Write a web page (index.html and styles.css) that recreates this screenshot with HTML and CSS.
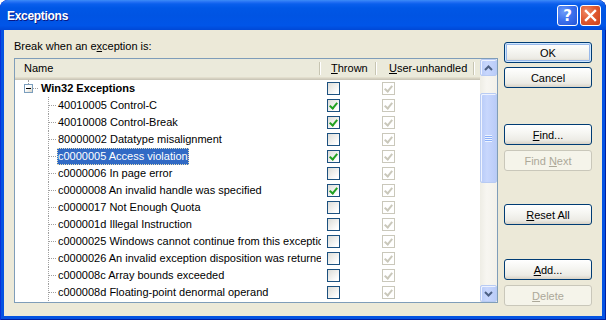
FILE: index.html
```html
<!DOCTYPE html>
<html lang="en">
<head>
    <meta charset="UTF-8">
    <title>Exceptions</title>
    <link rel="stylesheet" href="styles.css">
</head>
<body>
    <div class="window">
        <div class="titlebar">
            <span class="title">Exceptions</span>
            <div class="caption-btns">
                <span class="cap-btn help">?</span>
                <span class="cap-btn close">
                    <svg width="13" height="13" viewBox="0 0 13 13"><path d="M2 2 L11 11 M11 2 L2 11" stroke="#fff" stroke-width="2.4" stroke-linecap="square"/></svg>
                </span>
            </div>
        </div>

        <div class="client">
            <div class="left">
                <div class="prompt">Break when an e<u>x</u>ception is:</div>
                <div class="list">
                    <div class="list-main">
                        <div class="header">
                            <div class="hcell h-name">Name</div>
                            <div class="hcell h-thrown"><u>T</u>hrown</div>
                            <div class="hcell h-user"><u>U</u>ser-unhandled</div>
                            <div class="hcell h-fill"></div>
                        </div>
                        <div class="rows">
                            <div class="row">
                                <div class="cell name root"><span class="exp"><span class="exp-box"></span></span><span class="stub"></span><b class="label">Win32 Exceptions</b></div>
                                <div class="cell thrown"><span class="cb"></span></div>
                                <div class="cell user"><span class="cb off on"></span></div>
                            </div>
                            <div class="row">
                                <div class="cell name child"><span class="twig"></span><span class="label">40010005 Control-C</span></div>
                                <div class="cell thrown"><span class="cb on"></span></div>
                                <div class="cell user"><span class="cb off on"></span></div>
                            </div>
                            <div class="row">
                                <div class="cell name child"><span class="twig"></span><span class="label">40010008 Control-Break</span></div>
                                <div class="cell thrown"><span class="cb on"></span></div>
                                <div class="cell user"><span class="cb off on"></span></div>
                            </div>
                            <div class="row">
                                <div class="cell name child"><span class="twig"></span><span class="label">80000002 Datatype misalignment</span></div>
                                <div class="cell thrown"><span class="cb"></span></div>
                                <div class="cell user"><span class="cb off on"></span></div>
                            </div>
                            <div class="row">
                                <div class="cell name child"><span class="twig"></span><span class="label selected">c0000005 Access violation</span></div>
                                <div class="cell thrown"><span class="cb on"></span></div>
                                <div class="cell user"><span class="cb off on"></span></div>
                            </div>
                            <div class="row">
                                <div class="cell name child"><span class="twig"></span><span class="label">c0000006 In page error</span></div>
                                <div class="cell thrown"><span class="cb"></span></div>
                                <div class="cell user"><span class="cb off on"></span></div>
                            </div>
                            <div class="row">
                                <div class="cell name child"><span class="twig"></span><span class="label">c0000008 An invalid handle was specified</span></div>
                                <div class="cell thrown"><span class="cb on"></span></div>
                                <div class="cell user"><span class="cb off on"></span></div>
                            </div>
                            <div class="row">
                                <div class="cell name child"><span class="twig"></span><span class="label">c0000017 Not Enough Quota</span></div>
                                <div class="cell thrown"><span class="cb"></span></div>
                                <div class="cell user"><span class="cb off on"></span></div>
                            </div>
                            <div class="row">
                                <div class="cell name child"><span class="twig"></span><span class="label">c000001d Illegal Instruction</span></div>
                                <div class="cell thrown"><span class="cb"></span></div>
                                <div class="cell user"><span class="cb off on"></span></div>
                            </div>
                            <div class="row">
                                <div class="cell name child"><span class="twig"></span><span class="label">c0000025 Windows cannot continue from this exception</span></div>
                                <div class="cell thrown"><span class="cb"></span></div>
                                <div class="cell user"><span class="cb off on"></span></div>
                            </div>
                            <div class="row">
                                <div class="cell name child"><span class="twig"></span><span class="label">c0000026 An invalid exception disposition was returned</span></div>
                                <div class="cell thrown"><span class="cb"></span></div>
                                <div class="cell user"><span class="cb off on"></span></div>
                            </div>
                            <div class="row">
                                <div class="cell name child"><span class="twig"></span><span class="label">c000008c Array bounds exceeded</span></div>
                                <div class="cell thrown"><span class="cb"></span></div>
                                <div class="cell user"><span class="cb off on"></span></div>
                            </div>
                            <div class="row">
                                <div class="cell name child"><span class="twig"></span><span class="label">c000008d Floating-point denormal operand</span></div>
                                <div class="cell thrown"><span class="cb"></span></div>
                                <div class="cell user"><span class="cb off on"></span></div>
                            </div>
                        </div>
                    </div>
                    <div class="vscroll">
                        <span class="sb-btn">
                            <svg width="9" height="6" viewBox="0 0 9 6"><path d="M1 5 L4.5 1.5 L8 5" fill="none" stroke="#4D6185" stroke-width="2"/></svg>
                        </span>
                        <div class="sb-track">
                            <div class="sb-thumb"><span class="grip"></span></div>
                        </div>
                        <span class="sb-btn">
                            <svg width="9" height="6" viewBox="0 0 9 6"><path d="M1 1 L4.5 4.5 L8 1" fill="none" stroke="#4D6185" stroke-width="2"/></svg>
                        </span>
                    </div>
                </div>
            </div>

            <div class="buttons">
                <button class="btn btn-default">OK</button>
                <button class="btn gap-s">Cancel</button>
                <button class="btn gap-find"><u>F</u>ind...</button>
                <button class="btn gap-m" disabled>Find <u>N</u>ext</button>
                <button class="btn gap-reset"><u>R</u>eset All</button>
                <button class="btn gap-add"><u>A</u>dd...</button>
                <button class="btn gap-m" disabled><u>D</u>elete</button>
            </div>
        </div>
    </div>
</body>
</html>
```

FILE: styles.css
```css
body, html {
    margin: 0;
    padding: 0;
    background: #FFFFFF;
    font-family: "Liberation Sans", Arial, sans-serif;
    font-size: 11px;
    color: #000;
}

.window {
    width: 606px;
    height: 320px;
    background: #0553E2;
    border-radius: 8px 8px 0 0;
    display: flex;
    flex-direction: column;
    overflow: hidden;
    box-shadow: inset 1px 0 0 #0831D9, inset -1px 0 0 #001EA0, inset 0 -1px 0 #001EA0;
}

/* Titelleiste */
.titlebar {
    height: 30px;
    flex: none;
    display: flex;
    align-items: center;
    justify-content: space-between;
    padding: 0 5px 0 7px;
    background: linear-gradient(#3D8CF7 0, #2470F4 2px, #0A5FEC 4px, #0057E6 8px, #0054E3 50%, #0055E8 85%, #0048D6 100%);
    border-radius: 8px 8px 0 0;
}

.title {
    color: #FFFFFF;
    font-weight: bold;
    font-size: 12px;
    letter-spacing: -0.3px;
    text-shadow: 1px 1px 0 #0A1883;
    margin-top: 1px;
}

.caption-btns {
    display: flex;
    gap: 2px;
    margin-top: 1px;
}

.cap-btn {
    width: 21px;
    height: 21px;
    box-sizing: border-box;
    border: 1px solid #FFFFFF;
    border-radius: 3px;
    display: flex;
    align-items: center;
    justify-content: center;
    color: #FFFFFF;
}

.cap-btn.help {
    background: radial-gradient(circle at 30% 30%, #6E9CF9 0, #3D72EE 45%, #2355D8 100%);
    font-family: "DejaVu Sans", sans-serif;
    font-weight: bold;
    font-size: 15px;
}

.cap-btn.close {
    background: radial-gradient(circle at 30% 30%, #F08A66 0, #E15A31 45%, #C8411B 100%);
}

/* Dialoginhalt */
.client {
    flex: 1;
    margin: 0 4px 4px 4px;
    background: #ECE9D8;
    display: flex;
    padding: 10px 10px 0 10px;
}

.left {
    width: 484px;
}

.prompt {
    line-height: 13px;
    margin-bottom: 5px;
}

.list {
    height: 245px;
    box-sizing: border-box;
    border: 1px solid #7F9DB9;
    background: #FFFFFF;
    display: flex;
}

.list-main {
    flex: 1;
    overflow: hidden;
}

.header, .row {
    display: grid;
    grid-template-columns: 306px 56px 98px 5px;
}

.header {
    height: 21px;
    box-sizing: border-box;
    background: #EBEADB;
    box-shadow: inset 0 -1px 0 #CBC7B8, inset 0 -2px 0 #D6D2C2, inset 0 -3px 0 #E2DECD;
}

.hcell {
    height: 18px;
    line-height: 18px;
    white-space: nowrap;
    background:
        linear-gradient(#C7C5B2, #C7C5B2) right 1px top 3px / 1px 13px no-repeat,
        linear-gradient(#FFFFFF, #FFFFFF) right 0 top 3px / 1px 13px no-repeat;
}

.h-name { padding-left: 9px; }
.h-thrown { padding-left: 10px; }
.h-user { padding-left: 12px; }
.h-fill { background: none; }

.row {
    height: 17px;
}

.cell {
    display: flex;
    align-items: center;
    overflow: hidden;
    white-space: nowrap;
}

.cell.thrown { padding-left: 6px; }
.cell.user { padding-left: 5px; }

.cell.root {
    padding-left: 9px;
}

.cell.child {
    padding-left: 33px;
}

.label {
    display: inline-block;
    height: 17px;
    line-height: 17px;
    padding: 0 1px;
    box-sizing: border-box;
}

.label.selected {
    background: #316AC5;
    color: #FFFFFF;
    outline: 1px dotted #E8E0B8;
    outline-offset: -1px;
}

/* Baumlinien */
.exp {
    position: relative;
    width: 9px;
    height: 17px;
    display: flex;
    align-items: center;
    flex: none;
}

.exp::before {
    content: "";
    position: absolute;
    left: 4px;
    top: 0;
    height: 4px;
    border-left: 1px dotted #A0A0A0;
}

.exp-box {
    position: relative;
    width: 9px;
    height: 9px;
    box-sizing: border-box;
    border: 1px solid #7B9EBD;
    background: linear-gradient(135deg, #FFFFFF 40%, #D8D4C6);
}

.exp-box::after {
    content: "";
    position: absolute;
    left: 1px;
    top: 3px;
    width: 5px;
    height: 1px;
    background: #000;
}

.stub {
    width: 5px;
    border-top: 1px dotted #A0A0A0;
    margin-right: 2px;
    flex: none;
}

.twig {
    width: 8px;
    height: 17px;
    border-left: 1px dotted #A0A0A0;
    display: flex;
    align-items: center;
    flex: none;
}

.twig::after {
    content: "";
    width: 7px;
    border-top: 1px dotted #A0A0A0;
}

.rows {
    height: 222px;
    background: linear-gradient(90deg, transparent 33px, transparent 33px) ;
}

/* Checkboxen */
.cb {
    position: relative;
    width: 13px;
    height: 13px;
    box-sizing: border-box;
    border: 1px solid #1C5180;
    background: linear-gradient(135deg, #DCDCD7, #FFFFFF 85%);
    flex: none;
}

.cb.on::after {
    content: "";
    position: absolute;
    left: 3px;
    top: 1px;
    width: 3px;
    height: 6px;
    border: solid #21A121;
    border-width: 0 2px 2px 0;
    transform: rotate(40deg);
}

.cb.off {
    border-color: #CAC8BB;
    background: #FFFFFF;
}

.cb.off.on::after {
    border-color: #CAC8BB;
}

/* Bildlaufleiste */
.vscroll {
    width: 17px;
    flex: none;
    display: flex;
    flex-direction: column;
    background: linear-gradient(90deg, #EEEDE5, #F7F6F1 40%, #F3F1EA);
}

.sb-btn, .sb-thumb {
    box-sizing: border-box;
    border: 1px solid #B8CBF3;
    border-radius: 2px;
    background: linear-gradient(90deg, #B8CBF7, #C8D7FD 40%, #BACCF8);
    box-shadow: inset 1px 1px 0 #EEF3FF;
}

.sb-btn {
    height: 17px;
    display: flex;
    align-items: center;
    justify-content: center;
}

.sb-track {
    flex: 1;
    padding-top: 17px;
}

.sb-thumb {
    height: 90px;
    display: flex;
    align-items: center;
    justify-content: center;
}

.grip {
    width: 7px;
    height: 7px;
    background: repeating-linear-gradient(#EEF4FE 0 1px, #8CB0F8 1px 2px);
}

/* Schaltflächen */
.buttons {
    margin-left: 6px;
    padding-top: 2px;
    display: flex;
    flex-direction: column;
}

.btn {
    width: 88px;
    height: 21px;
    box-sizing: border-box;
    border: 1px solid #003C74;
    border-radius: 3px;
    background: linear-gradient(#FFFFFF, #F5F5F1 45%, #ECEBE5 80%, #D8D2C6);
    font-family: "Liberation Sans", Arial, sans-serif;
    font-size: 11px;
    color: #000;
    padding: 0;
    cursor: pointer;
}

.btn-default {
    box-shadow: inset 0 0 0 1px #CEE7FF, inset 0 0 0 2px #98B8EA;
}

.btn:disabled {
    border-color: #C9C7BA;
    background: #F5F4EA;
    color: #ACA899;
}

.gap-s { margin-top: 4px; }
.gap-m { margin-top: 5px; }
.gap-find { margin-top: 36px; }
.gap-reset { margin-top: 33px; }
.gap-add { margin-top: 34px; }
```
